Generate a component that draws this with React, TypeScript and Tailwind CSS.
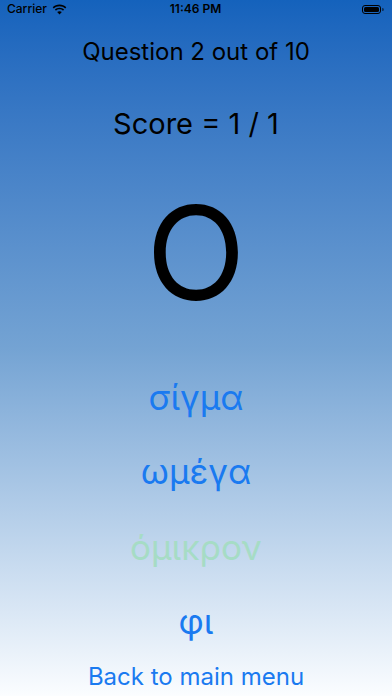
import React from "react";

const options = [
  { label: "σίγμα", dim: false, mt: "mt-[49px]" },
  { label: "ωμέγα", dim: false, mt: "mt-[14px]" },
  { label: "όμικρον", dim: true, mt: "mt-[16px]" },
  { label: "φι", dim: false, mt: "mt-[14px]" },
];

const StatusBar = () => (
  <div className="flex h-[20px] items-center justify-between pl-[7px] pr-[8px] text-[12px] text-black">
    <div className="flex w-[100px] items-center gap-[5px]">
      <span className="font-medium">Carrier</span>
      <svg width="15" height="11" viewBox="0 0 15 11">
        <path d="M7.5 2.2c2.2 0 4.2.8 5.7 2.2l1.1-1.1C12.5 1.6 10.1.6 7.5.6S2.5 1.6.7 3.3l1.1 1.1C3.3 3 5.3 2.2 7.5 2.2z" fill="#000" />
        <path d="M7.5 5.3c1.4 0 2.6.5 3.5 1.4l1.1-1.1C10.9 4.4 9.3 3.7 7.5 3.7S4.1 4.4 2.9 5.6L4 6.7c.9-.9 2.1-1.4 3.5-1.4z" fill="#000" />
        <path d="M7.5 10.4l2.3-2.3c-.6-.6-1.4-.9-2.3-.9s-1.7.3-2.3.9z" fill="#000" />
      </svg>
    </div>
    <span className="font-semibold">11:46 PM</span>
    <div className="flex w-[100px] justify-end">
      <div className="flex items-center">
        <div className="h-[9px] w-[19px] rounded-[3px] border border-black p-[1px]">
          <div className="h-full w-full rounded-[1.5px] bg-black" />
        </div>
        <div className="ml-[1px] h-[3px] w-[1.5px] rounded-r bg-black/50" />
      </div>
    </div>
  </div>
);

export default function App() {
  return (
    <div
      className="flex h-[696px] w-[392px] flex-col overflow-hidden bg-gradient-to-b from-[#1462bc] via-[#74a3d3] to-[#fbfdff]"
      style={{ fontFamily: "Inter, 'Noto Sans', 'Liberation Sans', sans-serif" }}
    >
      <StatusBar />

      <div className="mt-[14px] h-[40px] text-center text-[24px] leading-[40px] text-black">
        Question 2 out of 10
      </div>

      <div className="mt-[32px] h-[40px] text-center text-[29px] leading-[40px] text-black">
        Score = 1 / 1
      </div>

      <div className="mt-[44px] flex h-[140px] items-center justify-center text-[130px] leading-none text-black">
        Ο
      </div>

      {options.map((o) => (
        <button
          key={o.label}
          className={`${o.mt} h-[60px] text-center text-[35px] leading-[60px] ${
            o.dim ? "text-[#a6dcc5]" : "text-[#1a7af0]"
          }`}
        >
          {o.label}
        </button>
      ))}

      <button className="mt-[6px] h-[40px] text-center text-[24px] leading-[40px] text-[#1a7af0]">
        Back to main menu
      </button>
    </div>
  );
}
